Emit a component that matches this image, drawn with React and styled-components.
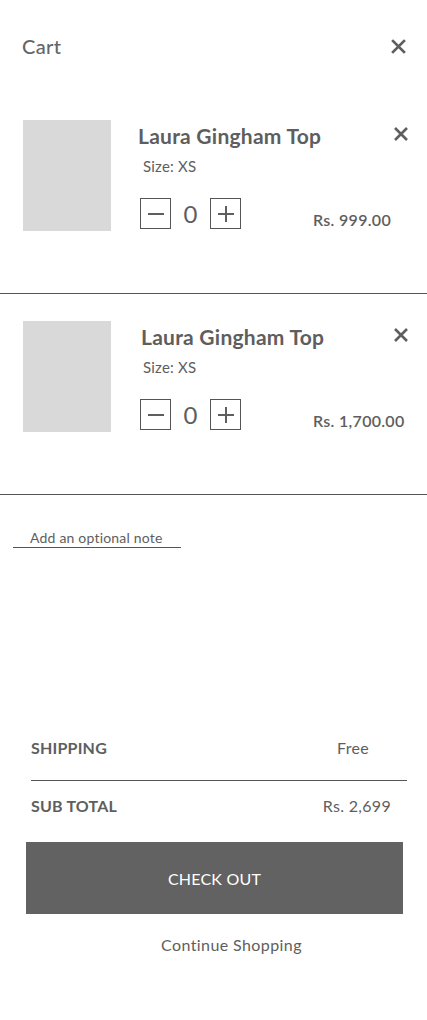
import styled, { createGlobalStyle } from "styled-components";

const GlobalStyle = createGlobalStyle`
    body {
        margin: 0;
        background: #ffffff;
        font-family: Lato, "Liberation Sans", sans-serif;
        color: #5e5e5e;
    }
`;

const Page = styled.div`
    width: 427px;
    min-height: 1020px;
    background: #ffffff;
    display: flex;
    flex-direction: column;
`;

const Header = styled.div`
    height: 93px;
    box-sizing: border-box;
    padding: 34px 19px 0 22px;
    display: flex;
    justify-content: space-between;
    align-items: flex-start;
`;

const Title = styled.div`
    font-size: 20px;
    line-height: 24px;
    font-weight: 500;
    color: #666666;
    letter-spacing: 0.4px;
`;

const CloseBtn = styled.button`
    border: none;
    background: none;
    padding: 0;
    width: ${(p) => p.$size}px;
    height: ${(p) => p.$size}px;
    display: flex;
    align-items: center;
    justify-content: center;
    margin-top: ${(p) => p.$top || 0}px;
    cursor: pointer;
`;

const CrossIcon = ({ size }) => (
    <svg width={size} height={size} viewBox="0 0 16 16">
        <path d="M2 2 L14 14 M14 2 L2 14" stroke="#5e5e5e" strokeWidth="2.6" strokeLinecap="butt" />
    </svg>
);

const Item = styled.div`
    display: flex;
    padding: 27px 0 62px 23px;
    border-bottom: 1px solid #555555;
`;

const Thumb = styled.div`
    width: 88px;
    height: 111px;
    background: #d9d9d9;
    flex-shrink: 0;
`;

const Info = styled.div`
    flex: 1;
    padding-left: 29px;
    padding-right: 16px;
    display: flex;
    flex-direction: column;
`;

const TopRow = styled.div`
    display: flex;
    justify-content: space-between;
    align-items: flex-start;
`;

const ItemName = styled.div`
    margin-top: 4px;
    margin-left: ${(p) => p.$shift}px;
    font-size: 21px;
    line-height: 24px;
    font-weight: 700;
    letter-spacing: 0.25px;
    color: #5e5e5e;
`;

const SizeLabel = styled.div`
    margin-top: 8px;
    margin-left: 3px;
    font-size: 15px;
    line-height: 20px;
    letter-spacing: 0.2px;
    color: #5e5e5e;
`;

const QtyRow = styled.div`
    margin-top: 22px;
    display: flex;
    align-items: flex-start;
`;

const QtyBox = styled.button`
    width: 31px;
    height: 31px;
    box-sizing: border-box;
    border: 1px solid #555555;
    background: #ffffff;
    padding: 0;
    display: flex;
    align-items: center;
    justify-content: center;
    cursor: pointer;
`;

const QtyValue = styled.div`
    width: 39px;
    text-align: center;
    font-size: 24px;
    line-height: 31px;
    font-weight: 400;
    color: #5e5e5e;
`;

const Price = styled.div`
    margin-left: 72px;
    padding-top: 12px;
    font-size: 16px;
    line-height: 20px;
    font-weight: 600;
    letter-spacing: 0.3px;
    color: #5e5e5e;
    white-space: nowrap;
`;

const MinusIcon = () => (
    <svg width="18" height="18" viewBox="0 0 18 18">
        <path d="M1 9 H17" stroke="#5e5e5e" strokeWidth="2" />
    </svg>
);

const PlusIcon = () => (
    <svg width="18" height="18" viewBox="0 0 18 18">
        <path d="M1 9 H17 M9 1 V17" stroke="#5e5e5e" strokeWidth="2" />
    </svg>
);

const NoteField = styled.div`
    margin: 35px 0 0 13px;
    width: 168px;
    box-sizing: border-box;
    padding: 0 0 1px 17px;
    border-bottom: 1px solid #555555;
    font-size: 14px;
    line-height: 16px;
    letter-spacing: 0.2px;
    color: #5e5e5e;
`;

const Summary = styled.div`
    margin: 190px 20px 0 31px;
`;

const SummaryRow = styled.div`
    display: flex;
    justify-content: space-between;
    padding: ${(p) => p.$pad};
    border-bottom: ${(p) => (p.$line ? "1px solid #555555" : "none")};
    font-size: 16px;
    line-height: 20px;
`;

const RowLabel = styled.div`
    font-weight: 700;
    letter-spacing: 0.2px;
    color: #5e5e5e;
`;

const RowValue = styled.div`
    padding-right: ${(p) => p.$inset}px;
    letter-spacing: 0.3px;
    color: #5e5e5e;
`;

const CheckoutBtn = styled.button`
    margin: 0 24px 0 26px;
    height: 72px;
    border: none;
    background: #626262;
    color: #ffffff;
    font-family: Lato, "Liberation Sans", sans-serif;
    font-size: 16px;
    letter-spacing: 0.2px;
    cursor: pointer;
`;

const ContinueLink = styled.div`
    margin-top: 21px;
    padding-left: 36px;
    text-align: center;
    font-size: 16px;
    line-height: 20px;
    letter-spacing: 0.4px;
    color: #5e5e5e;
`;

const items = [
    { name: "Laura Gingham Top", size: "XS", qty: 0, price: "Rs. 999.00", shift: -2 },
    { name: "Laura Gingham Top", size: "XS", qty: 0, price: "Rs. 1,700.00", shift: 1 },
];

export default function App() {
    return <Page>
        <GlobalStyle />
        <Header>
            <Title>Cart</Title>
            <CloseBtn $size={20} $top={2}>
                <CrossIcon size={17} />
            </CloseBtn>
        </Header>
        {items.map((item, index) => {
            return <Item key={index}>
                <Thumb />
                <Info>
                    <TopRow>
                        <ItemName $shift={item.shift}>{item.name}</ItemName>
                        <CloseBtn $size={20} $top={4}>
                            <CrossIcon size={16} />
                        </CloseBtn>
                    </TopRow>
                    <SizeLabel>Size: {item.size}</SizeLabel>
                    <QtyRow>
                        <QtyBox><MinusIcon /></QtyBox>
                        <QtyValue>{item.qty}</QtyValue>
                        <QtyBox><PlusIcon /></QtyBox>
                        <Price>{item.price}</Price>
                    </QtyRow>
                </Info>
            </Item>
        })}
        <NoteField>Add an optional note</NoteField>
        <Summary>
            <SummaryRow $line $pad="0 0 22px 0">
                <RowLabel>SHIPPING</RowLabel>
                <RowValue $inset={38}>Free</RowValue>
            </SummaryRow>
            <SummaryRow $pad="15px 0 26px 0">
                <RowLabel>SUB TOTAL</RowLabel>
                <RowValue $inset={16}>Rs. 2,699</RowValue>
            </SummaryRow>
        </Summary>
        <CheckoutBtn>CHECK OUT</CheckoutBtn>
        <ContinueLink>Continue Shopping</ContinueLink>
    </Page>;
}
